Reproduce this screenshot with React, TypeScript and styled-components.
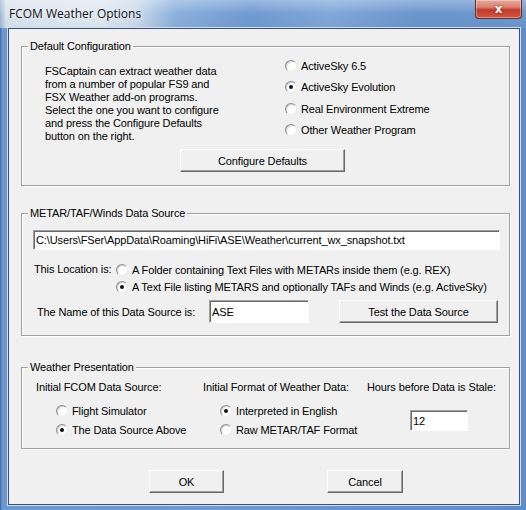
import React from "react";
import styled, { createGlobalStyle } from "styled-components";

const GlobalStyle = createGlobalStyle`
  html, body {
    margin: 0;
    padding: 0;
    background: #fff;
  }
  body {
    font-family: "Liberation Sans", Arial, sans-serif;
    font-size: 11px;
    letter-spacing: -0.12px;
    color: #000;
  }
`;

const Window = styled.div`
  width: 526px;
  height: 510px;
  display: flex;
  flex-direction: column;
  background: linear-gradient(90deg, #3c64a0 0, #6c98d0 2px, #6f9bd2 40%, #5f8cc8 100%);
  overflow: hidden;
`;

const TitleBar = styled.div`
  height: 28px;
  flex: none;
  display: flex;
  align-items: flex-start;
  justify-content: space-between;
  padding-left: 9px;
  background:
    linear-gradient(180deg, rgba(255, 255, 255, 0.3) 0, rgba(255, 255, 255, 0) 50%, rgba(0, 0, 0, 0.03) 100%),
    linear-gradient(90deg, #9fb6d3 0, #d9e3ef 6px, #e0e8f2 100px, #cddced 135px, #8cb0dc 175px, #6f9ad2 250px, #80a8d9 330px, #6a95cd 420px, #6c97cf 526px);
`;

const Title = styled.span`
  font-family: "Open Sans", "Liberation Sans", sans-serif;
  font-size: 12px;
  line-height: 16px;
  letter-spacing: 0;
  padding-top: 6px;
  color: #111;
  text-shadow: 0 0 6px rgba(255, 255, 255, 0.9);
`;

const CloseButton = styled.div`
  width: 45px;
  height: 18px;
  margin-right: 4px;
  display: flex;
  align-items: center;
  justify-content: center;
  border: 1px solid #6b2a24;
  border-top: none;
  border-radius: 0 0 4px 4px;
  background: linear-gradient(180deg, #e9a99c 0, #d9806f 40%, #c0392b 55%, #cf5a44 100%);
  box-shadow: inset 0 0 0 1px rgba(255, 255, 255, 0.35);
  color: #fff;
  font-family: "DejaVu Sans", sans-serif;
  font-weight: bold;
  font-size: 12px;
  letter-spacing: 0;
  text-shadow: 0 0 2px #5a1a12;
`;

const FrameBody = styled.div`
  flex: 1;
  display: flex;
  padding: 0 6px 5px 8px;
`;

const Client = styled.div`
  flex: 1;
  display: flex;
  flex-direction: column;
  background: #f0f0f0;
  border: 1px solid #34527a;
  box-shadow: 0 0 0 1px #d2deee;
  padding: 0 9px 0 12px;
`;

const Group = styled.fieldset<{ $gap: number }>`
  margin: ${(p) => p.$gap}px 0 0;
  padding: 0;
  min-width: 0;
  border: 1px solid #a0a0a0;
  box-shadow: inset 1px 1px 0 #fff, 1px 1px 0 #fff;
`;

const Legend = styled.legend`
  margin-left: 6px;
  padding: 0 2px;
  line-height: 13px;
  background: #f0f0f0;
`;

const ConfigGrid = styled.div`
  display: grid;
  grid-template-columns: 240px 1fr;
  padding: 2px 0 13px 23px;
`;

const Paragraph = styled.p`
  margin: 10px 0 0;
  line-height: 13px;
`;

const RadioList = styled.div`
  display: flex;
  flex-direction: column;
`;

const RadioRow = styled.label<{ $h: number }>`
  display: flex;
  align-items: center;
  gap: 4px;
  height: ${(p) => p.$h}px;
  white-space: nowrap;
`;

const RadioMark = styled.span<{ $checked?: boolean }>`
  position: relative;
  flex: none;
  width: 12px;
  height: 12px;
  box-sizing: border-box;
  border-radius: 50%;
  border: 1px solid;
  border-color: #8e8e8e #ececec #ececec #8e8e8e;
  background: #fff;
  box-shadow: inset 1px 1px 0 #cfcfcf;

  &::after {
    content: "";
    display: ${(p) => (p.$checked ? "block" : "none")};
    position: absolute;
    left: 3px;
    top: 3px;
    width: 4px;
    height: 4px;
    border-radius: 50%;
    background: #111;
  }
`;

const Button = styled.button<{ $w: number }>`
  width: ${(p) => p.$w}px;
  height: 23px;
  box-sizing: border-box;
  padding: 0;
  font: inherit;
  letter-spacing: inherit;
  color: #000;
  background: #f0f0f0;
  border: 1px solid;
  border-color: #fff #696969 #696969 #fff;
  box-shadow: inset -1px -1px 0 #a0a0a0;
`;

const ConfigButton = styled(Button)`
  grid-column: 1 / span 2;
  margin: 6px 0 0 135px;
`;

const TextBox = styled.div<{ $w: number; $h: number }>`
  width: ${(p) => p.$w}px;
  height: ${(p) => p.$h}px;
  box-sizing: border-box;
  display: flex;
  align-items: center;
  padding-left: 2px;
  background: #fff;
  border: 1px solid;
  border-color: #a0a0a0 #fff #fff #a0a0a0;
  box-shadow: inset 1px 1px 0 #696969;
  white-space: nowrap;
  overflow: hidden;
`;

const SourceBody = styled.div`
  display: flex;
  flex-direction: column;
  padding: 10px 9px 12px 11px;
`;

const LocationRow = styled.div`
  display: grid;
  grid-template-columns: 82px 1fr;
  margin: 11px 0 0 1px;
`;

const RowLabel = styled.span`
  line-height: 17px;
`;

const NameRow = styled.div`
  display: flex;
  align-items: center;
  margin-top: 5px;
`;

const NameLabel = styled.span`
  width: 172px;
  padding-left: 4px;
`;

const TestButton = styled(Button)`
  margin-left: 30px;
`;

const PresentationBody = styled.div`
  display: grid;
  grid-template-columns: 167px 164px 1fr;
  padding: 7px 0 9px 14px;
`;

const Column = styled.div<{ $indent: number }>`
  display: flex;
  flex-direction: column;

  & > ${RadioList}, & > ${TextBox} {
    margin-left: ${(p) => p.$indent}px;
  }
`;

const ColumnHead = styled.span`
  line-height: 13px;
  white-space: nowrap;
  margin-bottom: 8px;
`;

const StaleBox = styled(TextBox)`
  margin-top: 8px;
`;

const Footer = styled.div`
  display: flex;
  gap: 103px;
  margin-top: 21px;
  padding-left: 128px;
`;

type RadioProps = { label: string; checked?: boolean; h: number };

const Radio = ({ label, checked, h }: RadioProps) => (
  <RadioRow $h={h}>
    <RadioMark $checked={checked} />
    <span>{label}</span>
  </RadioRow>
);

export default function App() {
  return (
    <>
      <GlobalStyle />
      <Window>
        <TitleBar>
          <Title>FCOM Weather Options</Title>
          <CloseButton>x</CloseButton>
        </TitleBar>
        <FrameBody>
          <Client>
            <Group $gap={11}>
              <Legend>Default Configuration</Legend>
              <ConfigGrid>
                <Paragraph>
                  FSCaptain can extract weather data
                  <br />
                  from a number of popular FS9 and
                  <br />
                  FSX Weather add-on programs.
                  <br />
                  Select the one you want to configure
                  <br />
                  and press the Configure Defaults
                  <br />
                  button on the right.
                </Paragraph>
                <RadioList>
                  <Radio h={21.5} label="ActiveSky 6.5" />
                  <Radio h={21.5} label="ActiveSky Evolution" checked />
                  <Radio h={21.5} label="Real Environment Extreme" />
                  <Radio h={21.5} label="Other Weather Program" />
                </RadioList>
                <ConfigButton $w={165}>Configure Defaults</ConfigButton>
              </ConfigGrid>
            </Group>

            <Group $gap={21}>
              <Legend>METAR/TAF/Winds Data Source</Legend>
              <SourceBody>
                <TextBox $w={467} $h={20}>
                  C:\Users\FSer\AppData\Roaming\HiFi\ASE\Weather\current_wx_snapshot.txt
                </TextBox>
                <LocationRow>
                  <RowLabel>This Location is:</RowLabel>
                  <RadioList>
                    <Radio h={17} label="A Folder containing Text Files with METARs inside them (e.g. REX)" />
                    <Radio h={17} label="A Text File listing METARS and optionally TAFs and Winds (e.g. ActiveSky)" checked />
                  </RadioList>
                </LocationRow>
                <NameRow>
                  <NameLabel>The Name of this Data Source is:</NameLabel>
                  <TextBox $w={100} $h={23}>ASE</TextBox>
                  <TestButton $w={159}>Test the Data Source</TestButton>
                </NameRow>
              </SourceBody>
            </Group>

            <Group $gap={25}>
              <Legend>Weather Presentation</Legend>
              <PresentationBody>
                <Column $indent={20}>
                  <ColumnHead>Initial FCOM Data Source:</ColumnHead>
                  <RadioList>
                    <Radio h={18.5} label="Flight Simulator" />
                    <Radio h={18.5} label="The Data Source Above" checked />
                  </RadioList>
                </Column>
                <Column $indent={17}>
                  <ColumnHead>Initial Format of Weather Data:</ColumnHead>
                  <RadioList>
                    <Radio h={18.5} label="Interpreted in English" checked />
                    <Radio h={18.5} label="Raw METAR/TAF Format" />
                  </RadioList>
                </Column>
                <Column $indent={43}>
                  <ColumnHead>Hours before Data is Stale:</ColumnHead>
                  <StaleBox $w={58} $h={21}>12</StaleBox>
                </Column>
              </PresentationBody>
            </Group>

            <Footer>
              <Button $w={75}>OK</Button>
              <Button $w={76}>Cancel</Button>
            </Footer>
          </Client>
        </FrameBody>
      </Window>
    </>
  );
}
